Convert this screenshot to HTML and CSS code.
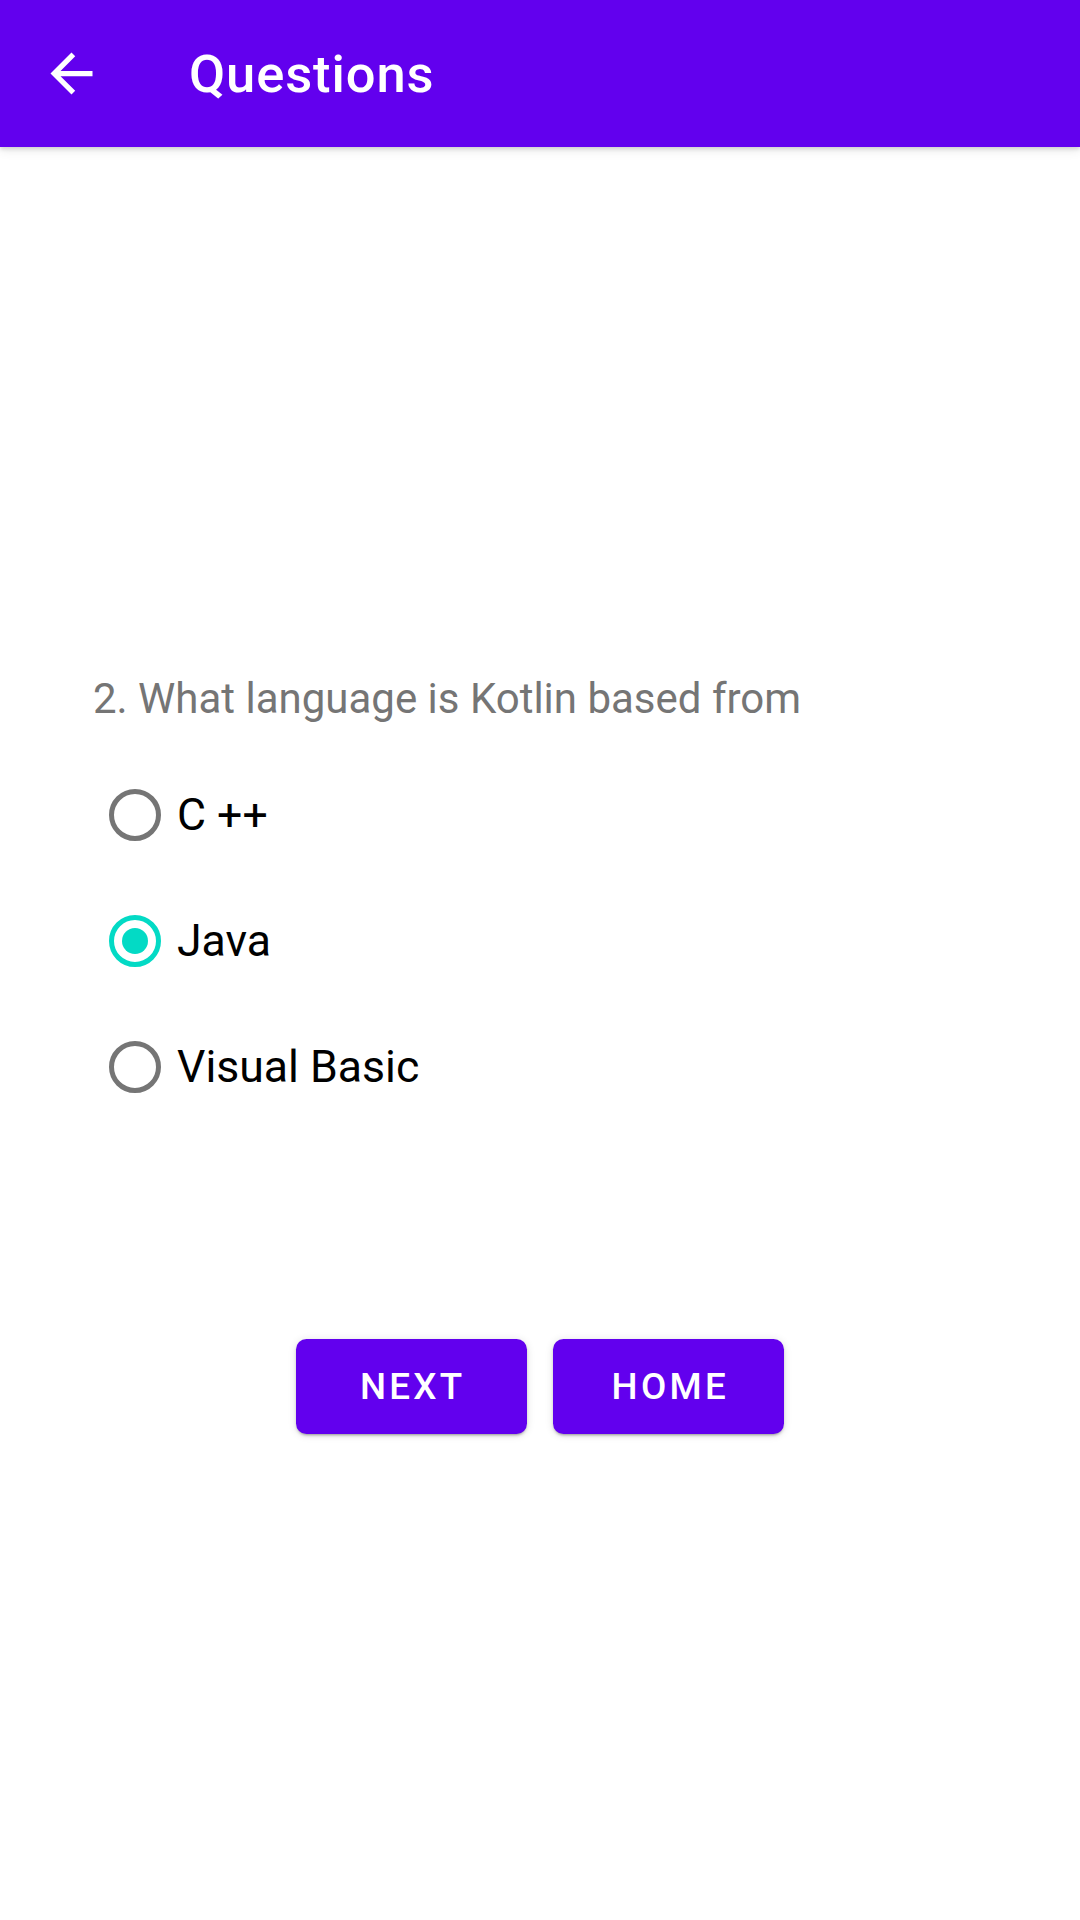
FILE: index.html
```html
<!DOCTYPE html>
<html lang="en">
<head>
<meta charset="utf-8">
<title>Questions</title>
<link rel="stylesheet" href="styles.css">
</head>
<body>
<header class="appbar">
  <button class="nav-btn" aria-label="Back">
    <svg class="nav-icon" viewBox="0 0 24 24" width="63" height="63"><path fill="#fff" d="M20 11H7.83l5.59-5.59L12 4l-8 8 8 8 1.41-1.41L7.83 13H20v-2z"/></svg>
  </button>
  <h1 class="title">Questions</h1>
</header>
<main class="content">
  <p class="question">2. What language is Kotlin based from</p>
  <div class="options" role="radiogroup">
    <div class="option"><span class="radio"></span><span class="label">C ++</span></div>
    <div class="option checked"><span class="radio"></span><span class="label">Java</span></div>
    <div class="option"><span class="radio"></span><span class="label">Visual Basic</span></div>
  </div>
  <div class="actions">
    <button class="btn">NEXT</button>
    <button class="btn">HOME</button>
  </div>
</main>
</body>
</html>
```

FILE: styles.css
```css
html, body {
  margin: 0;
  padding: 0;
  background: #ffffff;
  font-family: Roboto, "Noto Sans", Arial, sans-serif;
}
body {
  width: 1080px;
  height: 1920px;
  overflow: hidden;
}
.appbar {
  height: 147px;
  background: #6200EE;
  display: flex;
  align-items: center;
  box-shadow: 0 2px 4px rgba(0,0,0,0.14), 0 4px 10px rgba(0,0,0,0.08);
  position: relative;
  z-index: 1;
}
.nav-btn {
  width: 63px;
  height: 63px;
  margin-left: 40px;
  padding: 0;
  border: 0;
  background: transparent;
  display: flex;
}
.nav-icon {
  display: block;
}
.title {
  margin: 0 0 0 86px;
  color: #ffffff;
  font-size: 52.5px;
  font-weight: 500;
  line-height: 62px;
  letter-spacing: 0.9px;
}
.content {
  padding: 527px 0 0 93px;
}
.question {
  margin: 0;
  font-size: 42px;
  line-height: 49px;
  color: #757575;
  letter-spacing: 0;
}
.options {
  margin-top: 29px;
  display: flex;
  flex-direction: column;
}
.option {
  height: 126px;
  display: flex;
  align-items: center;
}
.radio {
  width: 84px;
  height: 52px;
  display: flex;
  align-items: center;
  justify-content: center;
  position: relative;
}
.radio::before {
  content: "";
  width: 52px;
  height: 52px;
  box-sizing: border-box;
  border: 5.25px solid #757575;
  border-radius: 50%;
}
.option.checked .radio::before {
  border-color: #03DAC5;
}
.option.checked .radio::after {
  content: "";
  position: absolute;
  width: 26px;
  height: 26px;
  border-radius: 50%;
  background: #03DAC5;
  left: 29px;
  top: 13px;
}
.label {
  font-size: 44.6px;
  color: #000000;
  line-height: 52px;
}
.actions {
  margin-top: 209px;
  margin-left: -93px;
  display: flex;
  justify-content: center;
  gap: 26.6px;
}
.btn {
  width: 231px;
  height: 94.5px;
  border: 0;
  border-radius: 10.5px;
  background: #6200EE;
  color: #ffffff;
  font-family: Roboto, "Noto Sans", Arial, sans-serif;
  font-size: 36.75px;
  font-weight: 500;
  letter-spacing: 3.28px;
  padding: 0 0 0 3px;
  box-shadow: 0 3px 2px -2px rgba(0,0,0,0.2), 0 2px 3px rgba(0,0,0,0.14), 0 1px 8px rgba(0,0,0,0.12);
}
```
